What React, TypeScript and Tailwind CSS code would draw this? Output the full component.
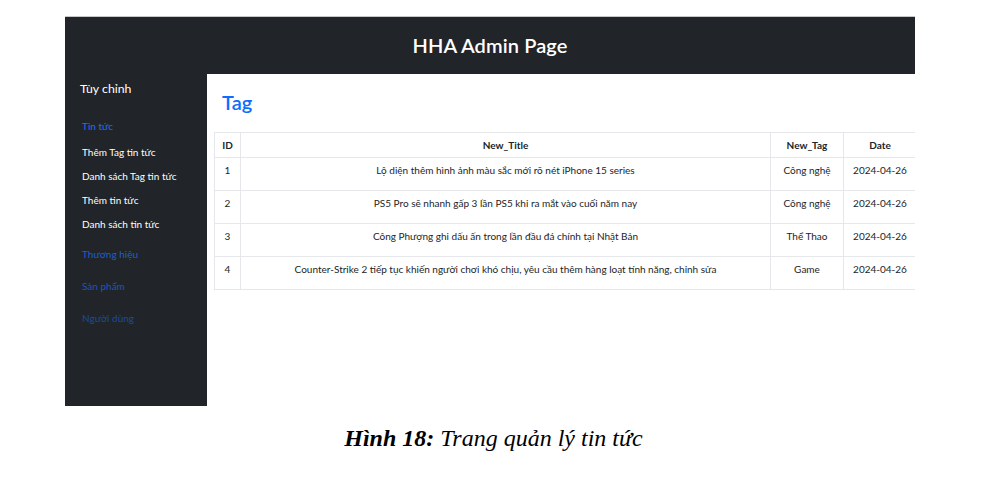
const rows = [
  { id: 1, title: "Lộ diện thêm hình ảnh màu sắc mới rõ nét iPhone 15 series", tag: "Công nghệ", date: "2024-04-26" },
  { id: 2, title: "PS5 Pro sẽ nhanh gấp 3 lần PS5 khi ra mắt vào cuối năm nay", tag: "Công nghệ", date: "2024-04-26" },
  { id: 3, title: "Công Phượng ghi dấu ấn trong lần đầu đá chính tại Nhật Bản", tag: "Thể Thao", date: "2024-04-26" },
  { id: 4, title: "Counter-Strike 2 tiếp tục khiến người chơi khó chịu, yêu cầu thêm hàng loạt tính năng, chỉnh sửa", tag: "Game", date: "2024-04-26" },
];

const subLinks = ["Thêm Tag tin tức", "Danh sách Tag tin tức", "Thêm tin tức", "Danh sách tin tức"];

export default function App() {
  return (
    <div className="w-[987px] h-[487px] bg-white flex flex-col">
      {/* screenshot */}
      <div
        className="mt-[16px] ml-[65px] w-[850px] h-[390px] overflow-hidden flex flex-col border-t border-[#c8c8c8]"
        style={{ fontFamily: 'Lato, "Noto Sans", sans-serif' }}
      >
        <header className="h-[57px] shrink-0 bg-[#212529] flex items-center justify-center">
          <h1 className="text-[20px] font-semibold text-white tracking-[0.1px] mt-[-2px]">HHA Admin Page</h1>
        </header>
        <div className="flex flex-1 min-h-0">
          <aside className="w-[142px] shrink-0 bg-[#212529] pl-[15px] pt-[6px]">
            <div className="text-[12.3px] text-white leading-[18px]">Tùy chỉnh</div>
            <div className="mt-[21px] pl-[2px] text-[10px]">
              <div className="text-[#1f6ff2] leading-[14px]">Tin tức</div>
              <div className="mt-[12px] flex flex-col gap-[10px] text-white">
                {subLinks.map((s) => (
                  <div key={s} className="leading-[14px]">{s}</div>
                ))}
              </div>
              <div className="mt-[16px] text-[#1b5ed2] leading-[14px]">Thương hiệu</div>
              <div className="mt-[18px] text-[#1a56bd] leading-[14px]">Sản phẩm</div>
              <div className="mt-[18px] text-[#1c4a9c] leading-[14px]">Người dùng</div>
            </div>
          </aside>
          <main className="flex-1 min-w-0 pl-[7px] pt-[15px]">
            <h2 className="pl-[8px] text-[20px] font-semibold text-[#0d6efd] leading-[26px]">Tag</h2>
            <table className="mt-[17px] w-[702px] table-fixed border-collapse text-[10px] text-[#212529]">
              <thead>
                <tr className="h-[25px]">
                  <th className="w-[26px] border border-[#e5e7ea] font-bold">ID</th>
                  <th className="w-[530px] border border-[#e5e7ea] font-bold">New_Title</th>
                  <th className="w-[73px] border border-[#e5e7ea] font-bold">New_Tag</th>
                  <th className="w-[73px] border border-[#e5e7ea] font-bold">Date</th>
                </tr>
              </thead>
              <tbody>
                {rows.map((r) => (
                  <tr key={r.id} className="h-[33px]">
                    <td className="border border-[#e5e7ea] text-center align-top pt-[5px]">{r.id}</td>
                    <td className="border border-[#e5e7ea] text-center align-top pt-[5px]">{r.title}</td>
                    <td className="border border-[#e5e7ea] text-center align-top pt-[5px]">{r.tag}</td>
                    <td className="border border-[#e5e7ea] text-center align-top pt-[5px]">{r.date}</td>
                  </tr>
                ))}
              </tbody>
            </table>
          </main>
        </div>
      </div>
      <p
        className="mt-[17px] self-center text-[24px] leading-[30px] text-black italic"
        style={{ fontFamily: '"Liberation Serif", "DejaVu Serif", serif' }}
      >
        <span className="font-bold">Hình 18:</span> Trang quản lý tin tức
      </p>
    </div>
  );
}
